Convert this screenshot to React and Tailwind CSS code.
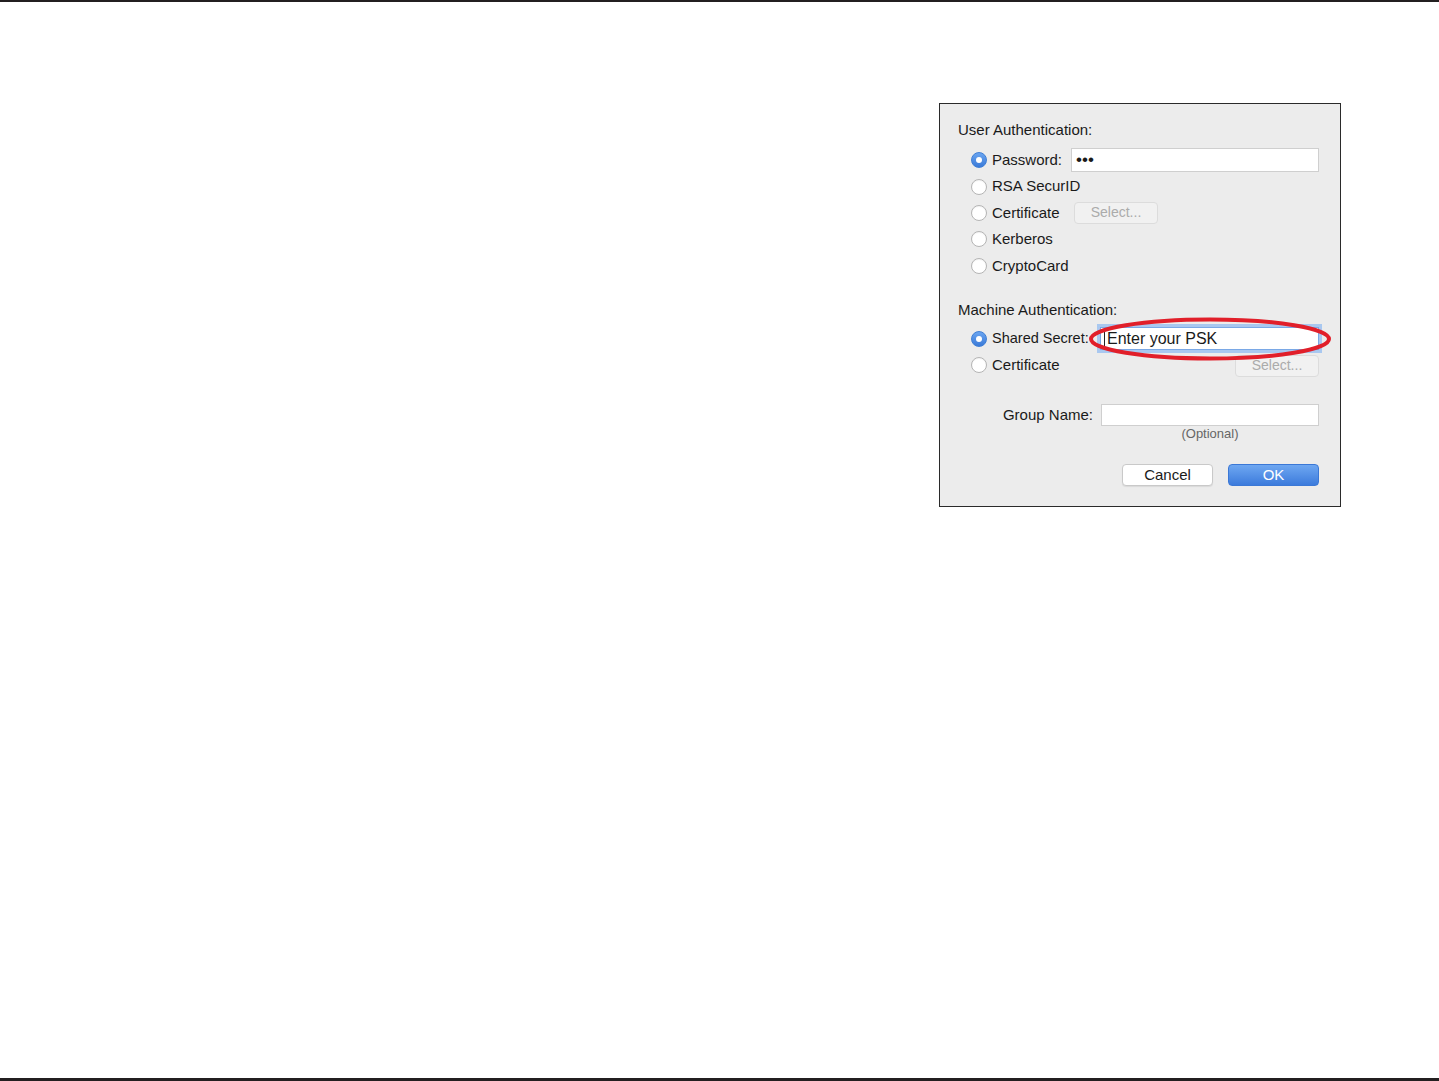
import React from "react";

const font = { fontFamily: '"Liberation Sans", Arial, sans-serif' };

function Radio({ checked }) {
  if (checked) {
    return (
      <span className="flex h-[16px] w-[16px] shrink-0 items-center justify-center rounded-full border border-[#3f7fd6] bg-gradient-to-b from-[#6ba5f0] to-[#3a7ad8]">
        <span className="h-[6px] w-[6px] rounded-full bg-white" />
      </span>
    );
  }
  return (
    <span className="h-[16px] w-[16px] shrink-0 rounded-full border border-[#b4b4b4] bg-white shadow-[inset_0_1px_1px_rgba(0,0,0,0.05)]" />
  );
}

function SelectBtn() {
  return (
    <span className="flex h-[22px] w-[84px] items-center justify-center rounded-[4px] border border-[#dcdcdc] bg-[#f1f1f1] text-[14px] text-[#ababab]">
      Select...
    </span>
  );
}

export default function App() {
  return (
    <div className="flex h-[1081px] w-[1439px] flex-col bg-white text-[#1a1a1a]" style={font}>
      <div className="h-[2px] w-full bg-[#231f20]" />
      <div className="flex-1 pl-[939px] pt-[101px]">
        <div className="relative flex h-[404px] w-[402px] flex-col border border-[#2a2a2a] bg-[#ececec] pl-[18px] pr-[21px]">
          <div className="mt-[16px] flex h-[20px] items-center text-[15px]">User Authentication:</div>

          <div className="mt-[7px] flex flex-col text-[15px]">
            <div className="flex h-[26.4px] items-center pl-[13px]">
              <Radio checked />
              <span className="ml-[5px] w-[79px]">Password:</span>
              <div className="flex h-[24px] flex-1 items-center border border-[#cfcfcf] bg-white pl-[4px] text-[17px]">
                •••
              </div>
            </div>
            <div className="flex h-[26.4px] items-center pl-[13px]">
              <Radio />
              <span className="ml-[5px]">RSA SecurID</span>
            </div>
            <div className="flex h-[26.4px] items-center pl-[13px]">
              <Radio />
              <span className="ml-[5px] w-[82px]">Certificate</span>
              <SelectBtn />
            </div>
            <div className="flex h-[26.4px] items-center pl-[13px]">
              <Radio />
              <span className="ml-[5px]">Kerberos</span>
            </div>
            <div className="flex h-[26.4px] items-center pl-[13px]">
              <Radio />
              <span className="ml-[5px]">CryptoCard</span>
            </div>
          </div>

          <div className="mt-[21px] flex h-[20px] items-center text-[15px]">Machine Authentication:</div>

          <div className="mt-[6px] flex flex-col text-[15px]">
            <div className="flex h-[26px] items-center pl-[13px]">
              <Radio checked />
              <span className="ml-[5px] w-[108px] whitespace-nowrap text-[14.5px]">Shared Secret:</span>
              <div className="flex h-[23px] flex-1 items-center border border-[#7aa8e6] bg-white pl-[3px] text-[16px] shadow-[0_0_0_3px_#a9c8f0]">
                <span className="mr-[2px] h-[16px] w-[1px] bg-[#222]" />
                Enter your PSK
              </div>
            </div>
            <div className="flex h-[26px] items-center justify-between pl-[13px]">
              <div className="flex items-center">
                <Radio />
                <span className="ml-[5px]">Certificate</span>
              </div>
              <div className="mt-[2px]">
                <SelectBtn />
              </div>
            </div>
          </div>

          <div className="mt-[26px] flex h-[22px] items-center text-[15px]">
            <span className="w-[135px] whitespace-nowrap text-right">Group Name:</span>
            <div className="ml-[8px] h-[22px] flex-1 border border-[#cfcfcf] bg-white" />
          </div>
          <div className="mt-[1px] flex h-[14px] items-center justify-center pl-[143px] text-[13px] text-[#666]">
            (Optional)
          </div>

          <div className="mt-[23px] flex justify-end gap-[15px] text-[15px]">
            <span className="flex h-[22px] w-[91px] items-center justify-center rounded-[4px] border border-[#c9c9c9] bg-white shadow-[0_1px_1px_rgba(0,0,0,0.08)]">
              Cancel
            </span>
            <span className="flex h-[22px] w-[91px] items-center justify-center rounded-[4px] border border-[#3b78d6] bg-gradient-to-b from-[#6ea7f1] to-[#3c7bdc] text-white">
              OK
            </span>
          </div>

          <svg className="pointer-events-none absolute left-[148px] top-[212px]" width="246" height="48" viewBox="0 0 246 48">
            <ellipse cx="122" cy="23" rx="119" ry="19.5" fill="none" stroke="#e11f2a" strokeWidth="4" />
          </svg>
        </div>
      </div>
      <div className="h-[3px] w-full bg-[#231f20]" />
    </div>
  );
}
